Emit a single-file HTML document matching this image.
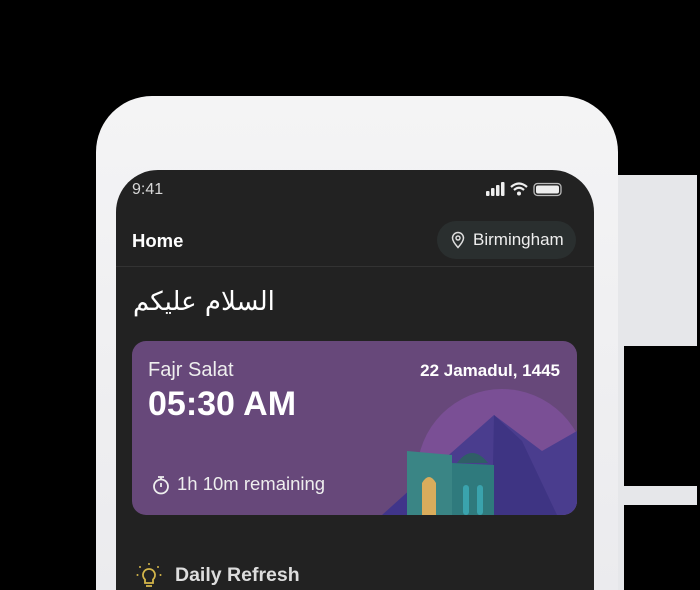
<!DOCTYPE html>
<html style="width:700px;height:590px;overflow:hidden"><head><meta charset="utf-8"><style>
*{margin:0;padding:0;box-sizing:border-box}
body{width:700px;height:590px;background:#000;position:relative;overflow:hidden;font-family:"Liberation Sans",sans-serif}
.abs{position:absolute}
</style></head><body>
<div class="abs" style="left:594px;top:175px;width:103px;height:415px;background:#e6e7ea"></div>
<div class="abs" style="left:624px;top:346px;width:73px;height:140px;background:#000"></div>
<div class="abs" style="left:624px;top:505px;width:73px;height:85px;background:#000"></div>
<div class="abs" style="left:96px;top:96px;width:522px;height:494px;background:linear-gradient(#f4f4f5,#ebebee);border-radius:56px 56px 0 0"></div>
<div class="abs" style="left:116px;top:170px;width:478px;height:420px;background:#222222;border-radius:42px 42px 0 0;overflow:hidden">
  <div class="abs" style="left:16px;top:11px;color:#d8d8d8;font-size:16px">9:41</div>
  <svg class="abs" style="left:370px;top:12px" width="92" height="16" viewBox="0 0 92 16">
    <rect x="0" y="9" width="3.5" height="5" rx="1" fill="#eee"/><rect x="5" y="6" width="3.5" height="8" rx="1" fill="#eee"/><rect x="10" y="3" width="3.5" height="11" rx="1" fill="#eee"/><rect x="15" y="0" width="3.5" height="14" rx="1" fill="#eee"/>
    <path d="M25 5 Q33 -2 41 5" stroke="#eee" stroke-width="2.2" fill="none"/><path d="M28 8 Q33 3.5 38 8" stroke="#eee" stroke-width="2.2" fill="none"/><circle cx="33" cy="11.5" r="2" fill="#eee"/>
    <rect x="48" y="1.5" width="27" height="12" rx="3.5" stroke="#bbb" stroke-width="1.3" fill="none"/><rect x="50" y="3.5" width="23" height="8" rx="2" fill="#eee"/>
  </svg>
  <div class="abs" style="left:16px;top:60px;color:#fff;font-size:18.5px;font-weight:bold">Home</div>
  <div class="abs" style="left:321px;top:51px;width:139px;height:38px;border-radius:19px;background:#2a2f2f"></div>
  <svg class="abs" style="left:335px;top:61px" width="14" height="18" viewBox="0 0 14 18"><path d="M7 16.5 C3 12 1.5 9.5 1.5 7 A5.5 5.5 0 0 1 12.5 7 C12.5 9.5 11 12 7 16.5Z" stroke="#ddd" stroke-width="1.5" fill="none"/><circle cx="7" cy="7" r="2" stroke="#ddd" stroke-width="1.5" fill="none"/></svg>
  <div class="abs" style="left:357px;top:60px;color:#eee;font-size:17px">Birmingham</div>
  <div class="abs" style="left:0;top:96px;width:478px;height:1px;background:#333"></div>
  <div class="abs" style="left:17px;top:112px;width:145px;color:#fff;font-size:26px;font-family:'DejaVu Sans',sans-serif;direction:rtl;text-align:left;line-height:40px">السلام عليكم</div>
  <div class="abs" style="left:16px;top:171px;width:445px;height:174px;border-radius:14px;background:#67487a;overflow:hidden">
    <svg class="abs" style="left:250px;top:40px" width="195" height="134" viewBox="0 0 195 134">
      <circle cx="120" cy="93" r="85" fill="#7a4f95"/>
      <path d="M110 134 L10 134 L60 80 L112 34 L160 70 L195 50 L195 134Z" fill="#4a3d8e"/>
      <path d="M112 34 L140 60 L175 134 L110 134Z" fill="#3e3483"/>
      <path d="M0 134 L60 80 L80 134Z" fill="#40358a"/>
      <path d="M25 134 L25 70 L70 74 L70 134Z" fill="#3a8585"/>
      <path d="M70 134 L70 82 L112 84 L112 134Z" fill="#2f7a7d"/>
      <path d="M75 82 Q90 62 106 82Z" fill="#2f5e66"/>
      <path d="M40 134 L40 102 Q47 90 54 102 L54 134Z" fill="#d9ac5c"/>
      <rect x="81" y="104" width="6" height="30" rx="3" fill="#3aa3ad"/><rect x="95" y="104" width="6" height="30" rx="3" fill="#3aa3ad"/>
    </svg>
    <div class="abs" style="left:16px;top:18px;color:#eee;font-size:20px">Fajr Salat</div>
    <div class="abs" style="right:17px;top:20px;color:#fff;font-size:17px;font-weight:bold">22 Jamadul, 1445</div>
    <div class="abs" style="left:16px;top:44px;color:#fff;font-size:34px;font-weight:bold">05:30 AM</div>
    <svg class="abs" style="left:20px;top:134px" width="18" height="20" viewBox="0 0 18 20"><circle cx="9" cy="11.5" r="7" stroke="#eee" stroke-width="1.8" fill="none"/><path d="M6 2h6M9 2v3M9 8v4" stroke="#eee" stroke-width="1.8"/></svg>
    <div class="abs" style="left:45px;top:132px;color:#eee;font-size:18.5px">1h 10m remaining</div>
  </div>
  <svg class="abs" style="left:20px;top:392px" width="26" height="28" viewBox="0 0 26 28"><path d="M13 7 A6 6 0 0 0 9 17.5 V21 H17 V17.5 A6 6 0 0 0 13 7Z" stroke="#d4b64a" stroke-width="1.8" fill="none"/><path d="M10 24h6" stroke="#d4b64a" stroke-width="1.8"/><circle cx="13" cy="2" r="1" fill="#d4b64a"/><circle cx="4" cy="5" r="1" fill="#d4b64a"/><circle cx="22" cy="5" r="1" fill="#d4b64a"/><circle cx="1.5" cy="13" r="1" fill="#d4b64a"/><circle cx="24.5" cy="13" r="1" fill="#d4b64a"/></svg>
  <div class="abs" style="left:59px;top:394px;color:#ddd;font-size:19.5px;font-weight:bold">Daily Refresh</div>
</div>
</body></html>
